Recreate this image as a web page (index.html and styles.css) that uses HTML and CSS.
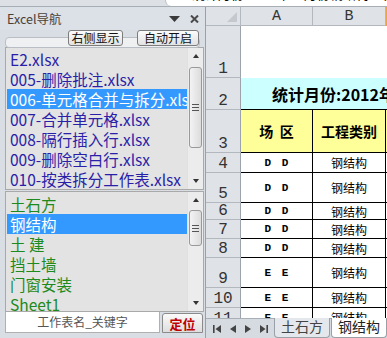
FILE: index.html
```html
<!DOCTYPE html>
<html lang="zh-CN">
<head>
    <meta charset="UTF-8">
    <title>Excel导航</title>
    <link rel="stylesheet" href="styles.css">
</head>
<body>
<div class="app">
    <div class="topbar">
        <div class="topbar-left"></div>
        <div class="formula"><span>统计月份:2012年12月份钢结构工程量统计表</span></div>
    </div>

    <div class="main">
        <!-- navigation panel -->
        <div class="nav">
            <div class="nav-head">
                <span class="nav-title">Excel导航</span>
                <span class="nav-tools">
                    <svg width="11" height="6" viewBox="0 0 11 6"><path d="M0 0H11L5.5 6Z" fill="#3a3a3a"/></svg>
                    <svg width="9" height="8" viewBox="0 0 9 8"><path d="M1 0.5L8 7.5M8 0.5L1 7.5" stroke="#4a4a4a" stroke-width="2"/></svg>
                </span>
            </div>

            <div class="nav-toolbar">
                <button class="tool-btn btn-right">右侧显示</button>
                <button class="tool-btn btn-auto">自动开启</button>
            </div>

            <div class="list list-files">
                <ul>
                    <li>E2.xlsx</li>
                    <li>005-删除批注.xlsx</li>
                    <li class="selected">006-单元格合并与拆分.xlsx</li>
                    <li>007-合并单元格.xlsx</li>
                    <li>008-隔行插入行.xlsx</li>
                    <li>009-删除空白行.xlsx</li>
                    <li>010-按类拆分工作表.xlsx</li>
                </ul>
                <div class="scroll">
                    <span class="arrow up"></span>
                    <div class="track"><div class="thumb thumb-files"><i></i><i></i><i></i></div></div>
                    <span class="arrow down"></span>
                </div>
            </div>

            <div class="list list-sheets">
                <ul>
                    <li>土石方</li>
                    <li class="selected">钢结构</li>
                    <li>土 建</li>
                    <li>挡土墙</li>
                    <li>门窗安装</li>
                    <li>Sheet1</li>
                </ul>
                <div class="scroll">
                    <span class="arrow up"></span>
                    <div class="track"><div class="thumb thumb-sheets"><i></i><i></i><i></i></div></div>
                    <span class="arrow down"></span>
                </div>
            </div>

            <div class="search">
                <div class="search-input">工作表名_关键字</div>
                <button class="locate">定位</button>
            </div>
        </div>

        <!-- worksheet -->
        <div class="sheet">
            <div class="grid">
                <div class="hd corner"><svg width="10" height="10" viewBox="0 0 10 10"><path d="M10 0V10H0Z" fill="#c5c9cf"/></svg></div>
                <div class="hd col">A</div>
                <div class="hd col">B</div>
                <div class="hd col col-active"></div>

                <div class="hd row">1</div>
                <div class="cell blank"></div><div class="cell blank"></div><div class="cell blank"></div>

                <div class="hd row">2</div>
                <div class="cell title">统计月份:2012年12月份</div>

                <div class="hd row">3</div>
                <div class="cell head">场&nbsp;&nbsp;区</div>
                <div class="cell head">工程类别</div>
                <div class="cell head"></div>

                <div class="hd row">4</div>
                <div class="cell code">D D</div><div class="cell">钢结构</div><div class="cell"></div>

                <div class="hd row">5</div>
                <div class="cell code">D D</div><div class="cell">钢结构</div><div class="cell"></div>

                <div class="hd row">6</div>
                <div class="cell code">D D</div><div class="cell">钢结构</div><div class="cell"></div>

                <div class="hd row">7</div>
                <div class="cell code">D D</div><div class="cell">钢结构</div><div class="cell"></div>

                <div class="hd row">8</div>
                <div class="cell code">D D</div><div class="cell">钢结构</div><div class="cell"></div>

                <div class="hd row">9</div>
                <div class="cell code">E E</div><div class="cell">钢结构</div><div class="cell"></div>

                <div class="hd row">10</div>
                <div class="cell code">E E</div><div class="cell">钢结构</div><div class="cell"></div>

                <div class="hd row">11</div>
                <div class="cell code">E E</div><div class="cell">钢结构</div><div class="cell"></div>
            </div>

            <div class="tabs">
                <div class="tab-nav">
                    <svg width="8" height="8" viewBox="0 0 8 8"><path d="M0 0H1.6V8H0ZM8 0V8L2.5 4Z" fill="#444"/></svg>
                    <svg width="6" height="8" viewBox="0 0 6 8"><path d="M6 0V8L0 4Z" fill="#444"/></svg>
                    <svg width="6" height="8" viewBox="0 0 6 8"><path d="M0 0V8L6 4Z" fill="#444"/></svg>
                    <svg width="8" height="8" viewBox="0 0 8 8"><path d="M0 0V8L5.5 4ZM6.4 0H8V8H6.4Z" fill="#444"/></svg>
                </div>
                <div class="tab">土石方</div>
                <div class="tab tab-active">钢结构</div>
            </div>
        </div>
    </div>
</div>
</body>
</html>
```

FILE: styles.css
```css
:root {
    --panel-bg: #d9dee5;
    --list-bg: #e3e3e3;
    --file-color: #2a1fa8;
    --sheet-color: #1c8a1c;
    --select: #3399ff;
    --header-bg: #dfe2e7;
    --header-line: #b3b8bf;
}

* {
    margin: 0;
    padding: 0;
    box-sizing: border-box;
}

body {
    width: 387px;
    height: 338px;
    overflow: hidden;
    background: #fff;
    font-family: "Liberation Sans", "Noto Sans CJK SC", sans-serif;
}

.app {
    display: flex;
    flex-direction: column;
    height: 338px;
}

/* formula bar strip */
.topbar {
    display: flex;
    height: 7px;
    border-bottom: 1px solid #a7adb5;
    background: #dde1e6;
}

.topbar-left {
    width: 165px;
}

.formula {
    flex: 1;
    background: #fff;
    border-left: 1px solid #b8bdc4;
    border-bottom-left-radius: 6px;
    overflow: hidden;
    padding-left: 26px;
}

.formula span {
    display: block;
    margin-top: -13px;
    font-size: 13px;
    line-height: 15px;
    white-space: nowrap;
    color: #000;
}

.main {
    flex: 1;
    display: flex;
    min-height: 0;
}

/* ---------- navigation panel ---------- */
.nav {
    width: 206px;
    background: var(--panel-bg);
    border-right: 1px solid #9aa0a8;
    display: flex;
    flex-direction: column;
    font-family: "Noto Sans CJK SC", sans-serif;
}

.nav-head {
    height: 23px;
    display: flex;
    align-items: center;
    justify-content: space-between;
    padding: 0 6px 0 7px;
    background: #dce1e7;
}

.nav-title {
    font-size: 12.5px;
    color: #4b4036;
}

.nav-tools {
    display: flex;
    align-items: center;
    gap: 10px;
}

.nav-toolbar {
    position: relative;
    height: 17px;
    display: flex;
    align-items: flex-start;
    padding-left: 68px;
    gap: 14px;
}

.nav-toolbar::before {
    content: "";
    position: absolute;
    left: 5px;
    right: 5px;
    top: 7px;
    height: 9px;
    border: 1px solid #b9bec5;
    border-radius: 4px;
    background: #eef0f2;
}

.tool-btn {
    position: relative;
    height: 16px;
    padding: 0;
    font-family: "Noto Sans CJK SC", sans-serif;
    font-size: 12px;
    line-height: 14px;
    white-space: nowrap;
    color: #111;
    border: 1px solid #7c7c7c;
    border-radius: 3px;
    background: linear-gradient(#fbfbfb, #e2e2e2);
}

.btn-right {
    width: 55px;
}

.btn-auto {
    width: 62px;
}

.list {
    display: flex;
    margin: 0 1px 0 5px;
    border: 1px solid #a9a9a9;
    background: var(--list-bg);
    overflow: hidden;
}

.list ul {
    flex: 1;
    list-style: none;
    padding: 1px 0 0 1px;
    overflow: hidden;
}

.list li {
    height: 20px;
    line-height: 20px;
    padding-left: 3px;
    font-size: 15.5px;
    white-space: nowrap;
    overflow: hidden;
}

.list-files {
    height: 143px;
}

.list-files li {
    color: var(--file-color);
}

.list-sheets {
    height: 121px;
    margin-top: 1px;
}

.list-sheets ul {
    padding-top: 2px;
}

.list-sheets li {
    color: var(--sheet-color);
}

.list li.selected {
    background: var(--select);
    color: #fff;
}

.scroll {
    width: 16px;
    display: flex;
    flex-direction: column;
    align-items: center;
    background: #ececec;
    border-left: 1px solid #e0e0e0;
}

.arrow {
    height: 16px;
    width: 16px;
    display: flex;
    align-items: center;
    justify-content: center;
}

.arrow::after {
    content: "";
    border-left: 3.5px solid transparent;
    border-right: 3.5px solid transparent;
}

.arrow.up::after {
    border-bottom: 4px solid #333;
}

.arrow.down::after {
    border-top: 4px solid #333;
}

.track {
    flex: 1;
    width: 100%;
    padding: 0 1px;
}

.thumb {
    height: 80px;
    border: 1px solid #999;
    border-radius: 3px;
    background: linear-gradient(90deg, #f3f3f3, #dcdcdc);
    display: flex;
    flex-direction: column;
    align-items: center;
    justify-content: center;
    gap: 2px;
}

.thumb i {
    display: block;
    width: 7px;
    height: 1px;
    background: #555;
}

.thumb-files {
    margin-top: 3px;
    height: 81px;
}

.thumb-sheets {
    margin-top: 2px;
    height: 36px;
}

.search {
    height: 21px;
    display: flex;
    margin: 0 2px 0 5px;
}

.search-input {
    width: 155px;
    background: #fff;
    border: 1px solid #b0b0b0;
    border-top: none;
    text-align: center;
    font-size: 12px;
    line-height: 20px;
    color: #555;
}

.locate {
    flex: 1;
    margin-left: 2px;
    margin-top: 1px;
    font-family: "Noto Sans CJK SC", sans-serif;
    font-size: 13px;
    font-weight: bold;
    color: #c00000;
    border: 1px solid #8a8a8a;
    border-radius: 3px 3px 0 0;
    background: linear-gradient(#fafafa, #dedede);
}

/* ---------- worksheet ---------- */
.sheet {
    flex: 1;
    display: flex;
    flex-direction: column;
    min-width: 0;
}

.grid {
    flex: 1;
    display: grid;
    grid-template-columns: 35px 72px 73px 20px;
    grid-template-rows: 19px 52px 32px 43px 20px 30px 17px 19px 19px 30px 20px 20px;
    overflow: hidden;
    font-family: "Noto Sans CJK SC", sans-serif;
}

.hd {
    background: var(--header-bg);
    color: #333;
    font-family: "Liberation Mono", monospace;
    font-size: 14px;
    display: flex;
    justify-content: center;
}

.corner {
    border-right: 1px solid var(--header-line);
    border-bottom: 1px solid var(--header-line);
    align-items: flex-end;
    justify-content: flex-end;
    padding: 0 3px 3px 0;
}

.col {
    align-items: center;
    border-right: 1px solid var(--header-line);
    border-bottom: 1px solid var(--header-line);
    font-size: 15px;
}

.col-active {
    background: #f8dc9c;
    border-left: 1px solid #f0a23c;
    border-bottom: 1px solid #f0a23c;
}

.row {
    align-items: flex-end;
    line-height: 16px;
    border-right: 1px solid #9da3ab;
    border-bottom: 1px solid var(--header-line);
    font-size: 16px;
}

.cell {
    display: flex;
    align-items: center;
    justify-content: center;
    font-size: 12px;
    color: #000;
    border-right: 1px solid #000;
    border-bottom: 1px solid #000;
    white-space: nowrap;
}

.cell.blank {
    border: none;
}

.cell.title {
    grid-column: span 3;
    justify-content: flex-start;
    padding-left: 31px;
    background: #ccffff;
    border: none;
    border-bottom: 1px solid #000;
    font-size: 16px;
    font-weight: bold;
    overflow: hidden;
}

.cell.head {
    background: #ffff99;
    font-size: 14px;
    font-weight: bold;
}

.cell.code {
    font-family: "Liberation Mono", monospace;
    font-size: 11px;
    font-weight: bold;
    word-spacing: 4px;
}

.tabs {
    height: 20px;
    display: flex;
    align-items: stretch;
    background: #d6dbe2;
    border-top: 1px solid #a9afb7;
}

.tab-nav {
    display: flex;
    align-items: center;
    gap: 9px;
    padding: 0 6px 0 7px;
}

.tab {
    width: 58px;
    margin-top: -1px;
    text-align: center;
    font-size: 14px;
    line-height: 19px;
    color: #444;
    background: #e4e7eb;
    border: 1px solid #9aa0a8;
    border-top: none;
    border-radius: 0 0 4px 4px;
}

.tab-active {
    margin-left: 1px;
    background: #fff;
    color: #222;
}
```
